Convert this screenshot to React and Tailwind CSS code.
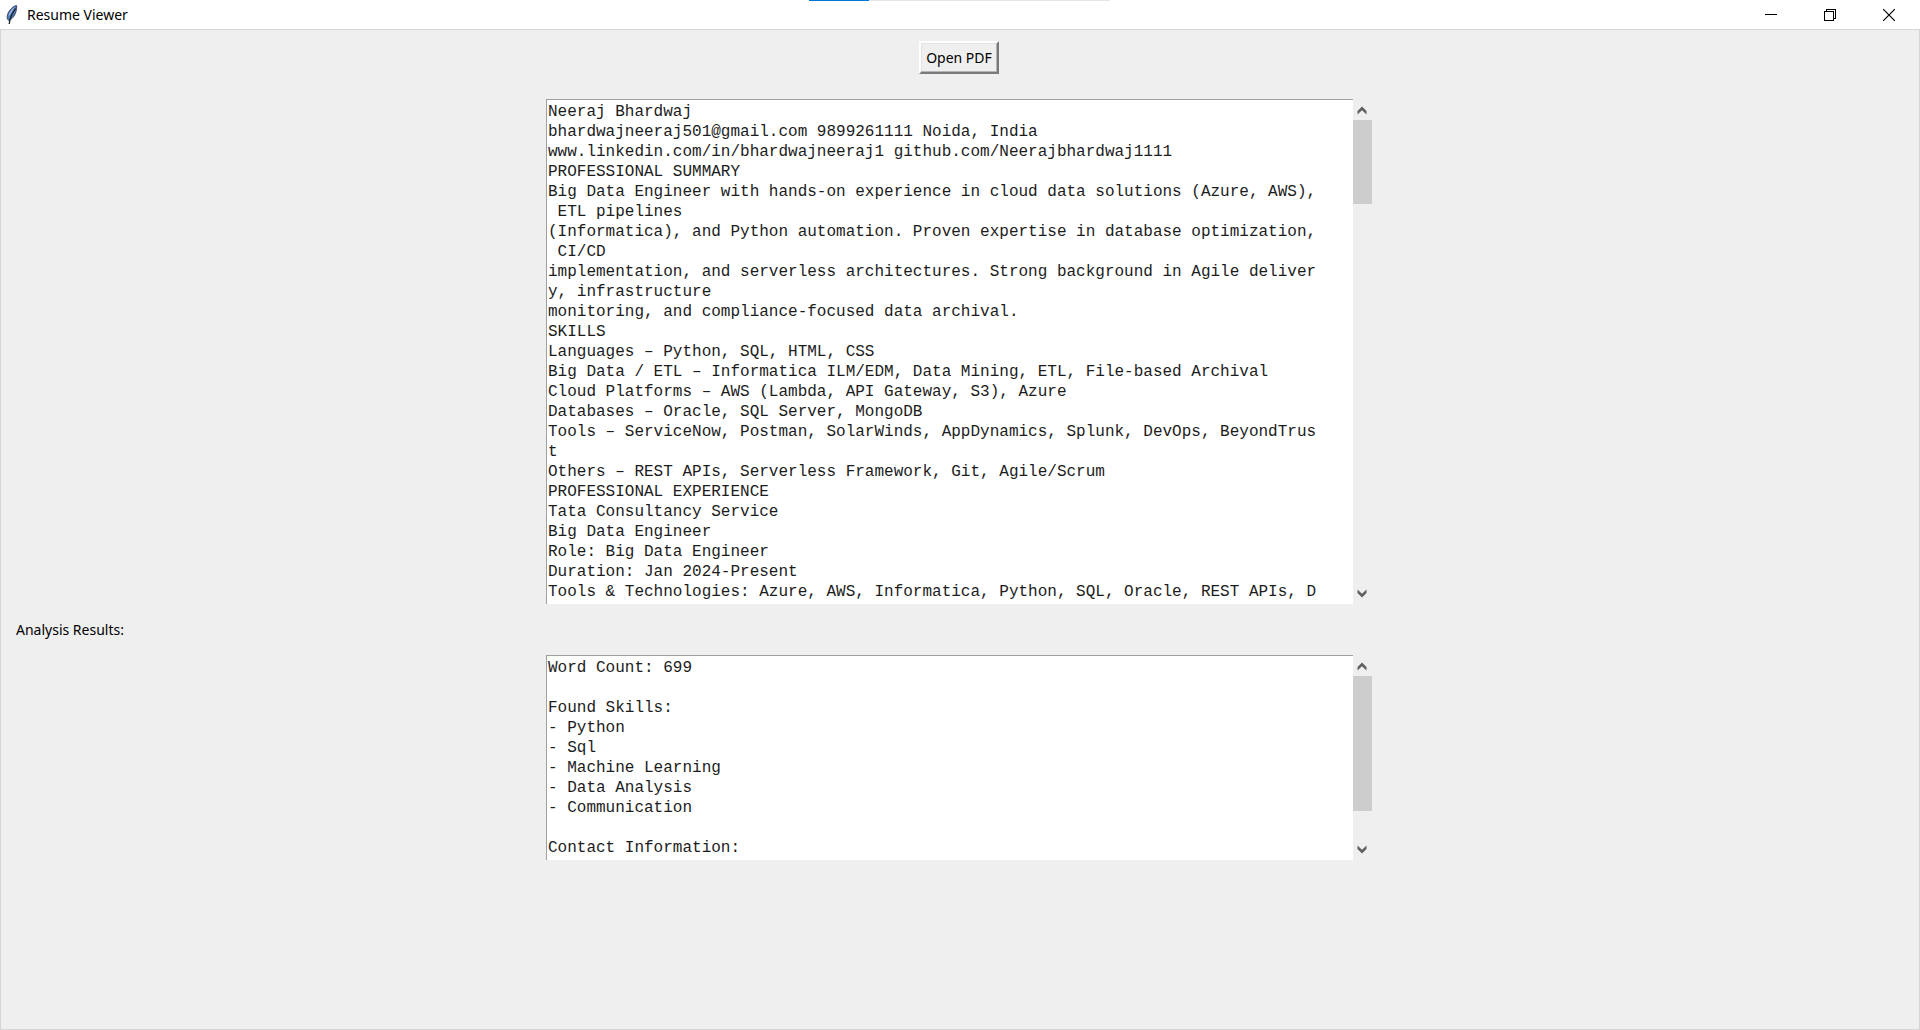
import React from "react";

const resumeText = `Neeraj Bhardwaj
bhardwajneeraj501@gmail.com 9899261111 Noida, India
www.linkedin.com/in/bhardwajneeraj1 github.com/Neerajbhardwaj1111
PROFESSIONAL SUMMARY
Big Data Engineer with hands-on experience in cloud data solutions (Azure, AWS),
 ETL pipelines
(Informatica), and Python automation. Proven expertise in database optimization,
 CI/CD
implementation, and serverless architectures. Strong background in Agile deliver
y, infrastructure
monitoring, and compliance-focused data archival.
SKILLS
Languages – Python, SQL, HTML, CSS
Big Data / ETL – Informatica ILM/EDM, Data Mining, ETL, File-based Archival
Cloud Platforms – AWS (Lambda, API Gateway, S3), Azure
Databases – Oracle, SQL Server, MongoDB
Tools – ServiceNow, Postman, SolarWinds, AppDynamics, Splunk, DevOps, BeyondTrus
t
Others – REST APIs, Serverless Framework, Git, Agile/Scrum
PROFESSIONAL EXPERIENCE
Tata Consultancy Service
Big Data Engineer
Role: Big Data Engineer
Duration: Jan 2024-Present
Tools & Technologies: Azure, AWS, Informatica, Python, SQL, Oracle, REST APIs, D`;

const analysisText = `Word Count: 699

Found Skills:
- Python
- Sql
- Machine Learning
- Data Analysis
- Communication

Contact Information:`;

function Feather() {
  return (
    <svg width="12" height="20" viewBox="0 0 12 20" aria-hidden="true">
      <path d="M10.5 0.5C7.5 0.8 3 5 1.6 9.5C0.8 12 1 14 2.6 15.4C5.5 14.8 8.8 11 9.8 7C10.5 4.5 11 2 10.5 0.5Z" fill="#4c7cbd" stroke="#3a4658" strokeWidth="1" />
      <path d="M9 2C6.5 3.2 3.4 7 2.4 11.5L4.2 9.5Z" fill="#a4c0e4" />
      <path d="M9.5 3.5C6.5 7.5 4 12 3.2 19" fill="none" stroke="#1c2430" strokeWidth="1.3" />
    </svg>
  );
}

function Chevron({ up }) {
  return (
    <svg width="10" height="9" viewBox="0 0 10 9" aria-hidden="true">
      <path
        d={up ? "M0.5 5L5 0.5L9.5 5V8.5L5 4.3L0.5 8.5Z" : "M0.5 0.5L5 4.7L9.5 0.5V4L5 8.5L0.5 4Z"}
        fill="#606060"
      />
    </svg>
  );
}

function ScrolledText({ label, text, rows, thumb }) {
  return (
    <div className="flex w-[826px] max-w-full">
      <textarea
        aria-label={label}
        defaultValue={text}
        rows={rows}
        wrap="off"
        spellCheck={false}
        className="block min-w-0 flex-1 resize-none overflow-hidden border-t border-l border-[#a0a0a0] bg-white pt-[2px] pb-[2px] pl-px font-['Liberation_Mono',monospace] text-[16px] leading-[20px] text-[#1c1c1c] outline-none"
      />
      <div className="flex w-[19px] shrink-0 flex-col bg-[#efefef]">
        <button type="button" aria-label={"Scroll up " + label} className="flex h-[21px] shrink-0 items-center justify-center pt-[2px] pr-px">
          <Chevron up />
        </button>
        <div className="min-h-0 flex-1">
          <div className={"w-full bg-[#cdcdcd] " + thumb} />
        </div>
        <button type="button" aria-label={"Scroll down " + label} className="flex h-[21px] shrink-0 items-center justify-center pr-px">
          <Chevron />
        </button>
      </div>
    </div>
  );
}

export default function App() {
  return (
    <div className="flex min-h-screen flex-col bg-[#efefef] font-['Noto_Sans','Open_Sans',sans-serif] text-[14px] text-black">
      <header className="relative flex h-[29px] items-center bg-white pl-[6px]">
        <div className="absolute top-0 left-[809px] flex h-px w-[301px] bg-[#e5e5e5]">
          <div className="w-[60px] bg-[#0078d7]" />
        </div>
        <Feather />
        <h1 className="ml-[9px] flex-1">Resume Viewer</h1>
        <button type="button" aria-label="Minimize" className="flex h-full w-[59px] items-center justify-center">
          <svg width="12" height="12" viewBox="0 0 12 12"><path d="M0 5.5H12" stroke="#000" /></svg>
        </button>
        <button type="button" aria-label="Restore" className="flex h-full w-[59px] items-center justify-center">
          <svg width="12" height="12" viewBox="0 0 12 12" fill="none" stroke="#000" shapeRendering="crispEdges">
            <path d="M0.5 2.5H9.5V11.5H0.5ZM2.5 2.5V0.5H11.5V9.5H9.5" />
          </svg>
        </button>
        <button type="button" aria-label="Close" className="mr-[2px] flex h-full w-[59px] items-center justify-center">
          <svg width="12" height="12" viewBox="0 0 12 12"><path d="M0 0L12 12M12 0L0 12" stroke="#000" strokeWidth="1.2" /></svg>
        </button>
      </header>
      <main className="flex flex-1 flex-col items-center border border-[#d5d5d5] pt-[11px] pr-[2px]">
        <button
          type="button"
          className="mb-[25px] flex h-[33px] w-[80px] items-center justify-center border-2 border-t-white border-l-white border-r-[#7a7a7a] border-b-[#7a7a7a] shadow-[inset_-1px_-1px_0_#b5b5b5,inset_1px_1px_0_#e3e3e3]"
        >
          Open PDF
        </button>
        <ScrolledText label="Resume text" text={resumeText} rows={25} thumb="h-[84px]" />
        <h2 className="flex h-[51px] items-center self-stretch pl-[15px]">Analysis Results:</h2>
        <ScrolledText label="Analysis results" text={analysisText} rows={10} thumb="h-[135px]" />
      </main>
    </div>
  );
}
